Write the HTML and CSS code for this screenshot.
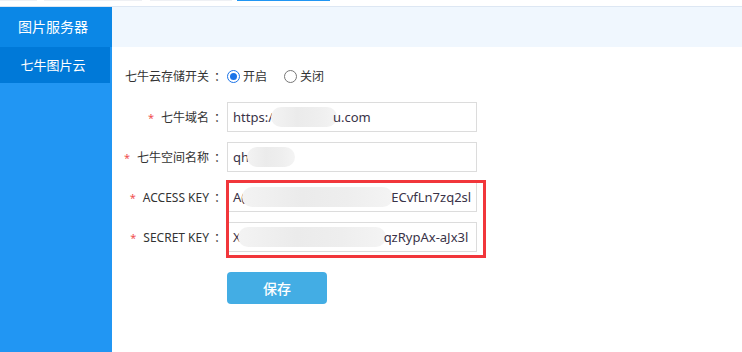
FILE: index.html
```html
<!DOCTYPE html>
<html lang="zh">
<head>
<meta charset="utf-8">
<title>七牛图片云</title>
<link rel="stylesheet" href="styles.css">
</head>
<body>
<div class="tabs">
  <div class="tab t1"></div>
  <div class="tab t2"></div>
  <div class="tab t3"></div>
  <div class="tab t4 active"></div>
</div>
<div class="page">
  <aside class="sidebar">
    <div class="side-head">图片服务器</div>
    <div class="side-item">七牛图片云</div>
  </aside>
  <main class="main">
    <div class="topbar"></div>
    <div class="form">
      <div class="row radio-row">
        <div class="label">七牛云存储开关<span class="colon">：</span></div>
        <label class="radio"><span class="dot on"></span>开启</label>
        <label class="radio"><span class="dot"></span>关闭</label>
      </div>
      <div class="row">
        <div class="label"><span class="req">*</span>七牛域名<span class="colon">：</span></div>
        <div class="input"><span>https:/</span><span class="blur b1"></span><span>u.com</span></div>
      </div>
      <div class="row">
        <div class="label"><span class="req">*</span>七牛空间名称<span class="colon">：</span></div>
        <div class="input"><span>qh</span><span class="blur b2"></span></div>
      </div>
      <div class="keys">
        <div class="row">
          <div class="label"><span class="req">*</span>ACCESS KEY<span class="colon">：</span></div>
          <div class="input"><span>A(</span><span class="blur b3"></span><span>ECvfLn7zq2sl</span></div>
        </div>
        <div class="row">
          <div class="label"><span class="req">*</span>SECRET KEY<span class="colon">：</span></div>
          <div class="input"><span>X</span><span class="blur b4"></span><span>qzRypAx-aJx3l</span></div>
        </div>
        <div class="highlight"></div>
      </div>
      <div class="row btn-row">
        <div class="label"></div>
        <button class="save">保存</button>
      </div>
    </div>
  </main>
</div>
</body>
</html>
```
FILE: styles.css
```css
* { box-sizing: border-box; }
html, body { margin: 0; padding: 0; background: #fff; }
body {
  font-family: "Noto Sans", "Noto Sans CJK SC", sans-serif;
  font-size: 13px;
  color: #333;
  width: 742px;
  height: 352px;
  overflow: hidden;
}
.tabs {
  height: 7px;
  border-bottom: 1px solid #dde7f3;
  display: flex;
}
.tab { height: 1px; background: #eef0f4; }
.t1 { width: 37px; }
.t2 { width: 98px; margin-left: 7px; }
.t3 { width: 82px; margin-left: 8px; }
.t4 { width: 93px; margin-left: 5px; background: #2196f3; }
.page { display: flex; height: 345px; }
.sidebar {
  width: 112px;
  background: #2196f3;
  color: #fff;
}
.side-head {
  height: 40px;
  line-height: 40px;
  background: #0b87e6;
  text-align: center;
  font-size: 14px;
  padding-right: 6px;
}
.side-item {
  height: 36px;
  line-height: 36px;
  width: 110px;
  background: #0079d8;
  text-align: center;
  font-size: 13px;
  padding-right: 4px;
}
.main { flex: 1; }
.topbar { height: 40px; background: #f0f7fe; }
.form { padding-top: 14px; }
.row { display: flex; align-items: center; height: 30px; margin-bottom: 10px; }
.radio-row { margin-bottom: 11px; }
.label {
  width: 115px;
  text-align: right;
  font-size: 12px;
  color: #333;
  white-space: nowrap;
}
.colon {
  display: inline-block;
  width: 18px;
  padding-left: 5px;
  text-align: left;
}
.req { color: #f05050; margin-right: 7px; font-size: 11px; }
.radio { display: flex; align-items: center; font-size: 12px; margin-right: 17px; cursor: pointer; }
.dot {
  width: 13px; height: 13px;
  border-radius: 50%;
  border: 1px solid #777;
  margin-right: 3px;
  display: inline-block;
  position: relative;
}
.dot.on { border-color: #1a73e8; }
.dot.on::after {
  content: "";
  position: absolute;
  left: 2px; top: 2px;
  width: 7px; height: 7px;
  border-radius: 50%;
  background: #1a73e8;
}
.input {
  width: 250px;
  height: 30px;
  border: 1px solid #dcdcdc;
  display: flex;
  align-items: center;
  padding-left: 5px;
  overflow: hidden;
  white-space: nowrap;
  color: #3a3348;
}
.blur {
  height: 20px;
  border-radius: 10px;
  background: linear-gradient(90deg, #f3f3f3, #ebebeb 40%, #eeeeee 70%, #f4f4f4);
  flex: none;
}
.b1 { width: 66px; margin: 0 -4px 0 -2px; }
.b2 { width: 48px; margin-left: -2px; }
.b3 { width: 151px; margin: 0 -2px 0 -3px; }
.b4 { width: 148px; margin: 0 -2px 0 -3px; }
.keys { position: relative; }
.highlight {
  position: absolute;
  left: 114px;
  top: -2px;
  width: 260px;
  height: 78px;
  border: 3px solid #f1363b;
  pointer-events: none;
}
.btn-row { margin-top: 20px; height: 32px; }
.save {
  width: 100px;
  height: 32px;
  border: none;
  border-radius: 4px;
  background: #43ade4;
  color: #fff;
  font-family: "Noto Sans CJK SC", sans-serif;
  font-size: 14px;
  font-weight: 500;
}
```
